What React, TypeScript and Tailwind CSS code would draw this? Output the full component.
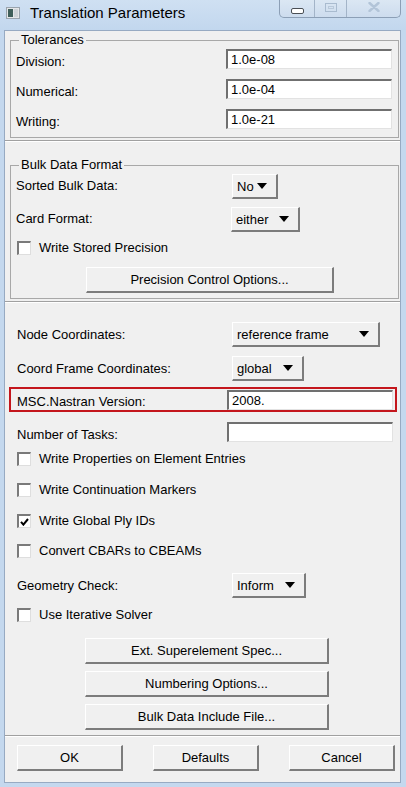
import React from "react";

const ui = "font-['Liberation_Sans',Arial,sans-serif] text-[13px] leading-[14px] text-black";

function TextField({ value = "", className = "" }: { value?: string; className?: string }) {
  return (
    <div
      className={`h-[20px] bg-white border-t-2 border-l-2 border-t-[#707070] border-l-[#707070] border-r border-b border-r-[#e2e2e2] border-b-[#e2e2e2] pl-[3px] pt-[1px] leading-[15px] ${className}`}
    >
      {value}
    </div>
  );
}

function Triangle() {
  return (
    <svg width="10" height="6" viewBox="0 0 10 6">
      <polygon points="0,0 10,0 5,6" fill="#000" />
    </svg>
  );
}

function OptionMenu({ value, className = "" }: { value: string; className?: string }) {
  return (
    <div
      className={`h-[25px] flex items-center justify-between pl-[4px] pr-[9px] bg-[#f0f0f0] border-t border-l border-t-white border-l-white border-r-2 border-b-2 border-r-[#7c7c7c] border-b-[#7c7c7c] ${className}`}
    >
      <span className="pt-[2px]">{value}</span>
      <Triangle />
    </div>
  );
}

function PushButton({ label, className = "" }: { label: string; className?: string }) {
  return (
    <button
      type="button"
      className={`h-[26px] flex items-center justify-center bg-[#f0f0f0] border-t border-l border-t-white border-l-white border-r-2 border-b-2 border-r-[#7c7c7c] border-b-[#7c7c7c] ${className}`}
    >
      {label}
    </button>
  );
}

function CheckBox({ label, checked = false }: { label: string; checked?: boolean }) {
  return (
    <div className="h-[16px] flex items-center pl-[12px]">
      <span className="w-[14px] h-[14px] bg-white border-t-2 border-l-2 border-t-[#7a7a7a] border-l-[#7a7a7a] border-r border-b border-r-[#dedede] border-b-[#dedede] flex items-center justify-center">
        {checked && (
          <svg width="9" height="8" viewBox="0 0 9 8">
            <path d="M1 3.8 L3.4 6.6 L8 1" stroke="#000" strokeWidth="2" fill="none" />
          </svg>
        )}
      </span>
      <span className="ml-[8px]">{label}</span>
    </div>
  );
}

function Separator() {
  return <div className="h-[2px] shrink-0 border-t border-t-[#a0a0a0] border-b border-b-white" />;
}

function TitleBar() {
  return (
    <div className="h-[30px] shrink-0 flex items-start bg-gradient-to-b from-[#cfe0f2] to-[#c2d7ee]">
      <svg width="14" height="12" viewBox="0 0 14 12" className="mt-[7px] ml-[6px]">
        <rect x="0.5" y="0.5" width="13" height="11" fill="#e4e6e8" stroke="#9aa4ad" />
        <rect x="2" y="2" width="5" height="8" fill="#3f5f5a" />
        <rect x="8" y="2" width="4" height="8" fill="#cfd4d8" />
      </svg>
      <span className="ml-[10px] mt-[4px] font-['Liberation_Sans',Arial,sans-serif] text-[15px] leading-[18px] text-black">
        Translation Parameters
      </span>
      <div className="ml-auto mr-[5px] flex h-[18px] rounded-b-[5px] border border-t-0 border-[#8c9fb6] bg-gradient-to-b from-[#dbe7f3] to-[#cddcee] overflow-hidden">
        <div className="w-[35px] flex items-center justify-center border-r border-r-[#a3b4c8]">
          <span className="w-[13px] h-[6px] mt-[4px] rounded-[2px] bg-white border border-[#4a4f55]" />
        </div>
        <div className="w-[32px] flex items-center justify-center border-r border-r-[#a3b4c8]">
          <span className="w-[12px] h-[9px] -mt-[2px] border border-[#a9bbcf] flex items-center justify-center">
            <span className="w-[6px] h-[3px] border border-[#b9c9da]" />
          </span>
        </div>
        <div className="w-[53px] flex items-center justify-center">
          <svg width="12" height="10" viewBox="0 0 12 10" className="-mt-[3px]">
            <path d="M1.5 1 L10.5 9 M10.5 1 L1.5 9" stroke="#b2c4d8" strokeWidth="2.4" strokeLinecap="round" />
          </svg>
        </div>
      </div>
    </div>
  );
}

export default function App() {
  return (
    <div className={`w-[406px] h-[787px] flex flex-col bg-[#c4d8ee] ${ui}`}>
      <TitleBar />
      <div className="ml-[4px] mr-[5px] h-[753px] flex flex-col bg-[#f0f0f0] border border-[#97aac2]">
        {/* Tolerances */}
        <div className="h-[109px] shrink-0 flex flex-col pt-[2px] pb-[2px] pl-[5px] pr-[1px]">
          <fieldset className="flex-1 border border-[#a8a8a8] pr-[6px]">
            <legend className="ml-[8px] px-[2px] leading-[14px]">Tolerances</legend>
            <div className="flex flex-col gap-[10px] pt-[2px]">
              <div className="flex items-end justify-between pl-[5px]">
                <span>Division:</span>
                <TextField value="1.0e-08" className="w-[166px]" />
              </div>
              <div className="flex items-end justify-between pl-[5px]">
                <span>Numerical:</span>
                <TextField value="1.0e-04" className="w-[166px]" />
              </div>
              <div className="flex items-end justify-between pl-[5px]">
                <span>Writing:</span>
                <TextField value="1.0e-21" className="w-[166px]" />
              </div>
            </div>
          </fieldset>
        </div>
        <Separator />

        {/* Bulk Data Format */}
        <div className="h-[159px] shrink-0 flex flex-col pt-[16px] pb-[2px] pl-[5px] pr-[1px]">
          <fieldset className="flex-1 border border-[#a8a8a8]">
            <legend className="ml-[8px] px-[2px] leading-[14px]">Bulk Data Format</legend>
            <div className="flex flex-col pt-[1px]">
              <div className="h-[26px] flex items-center">
                <span className="w-[221px] pl-[5px]">Sorted Bulk Data:</span>
                <OptionMenu value="No" className="w-[46px]" />
              </div>
              <div className="h-[26px] mt-[7px] flex items-center">
                <span className="w-[220px] pl-[5px]">Card Format:</span>
                <OptionMenu value="either" className="w-[69px]" />
              </div>
              <div className="mt-[8px] -ml-[6px]">
                <CheckBox label="Write Stored Precision" />
              </div>
              <div className="mt-[11px] pl-[75px]">
                <PushButton label="Precision Control Options..." className="w-[248px]" />
              </div>
            </div>
          </fieldset>
        </div>
        <Separator />

        {/* General options */}
        <div className="h-[432px] shrink-0 flex flex-col pt-[19px]">
          <div className="h-[25px] flex items-center">
            <span className="w-[227px] pl-[12px]">Node Coordinates:</span>
            <OptionMenu value="reference frame" className="w-[148px]" />
          </div>
          <div className="h-[25px] mt-[9px] flex items-center">
            <span className="w-[227px] pl-[12px]">Coord Frame Coordinates:</span>
            <OptionMenu value="global" className="w-[72px]" />
          </div>
          <div className="h-[25px] mt-[6px] ml-[4px] w-[388px] border-2 border-[#c4161c] flex items-end justify-between pr-[2px]">
            <span className="pl-[6px] pb-[1px]">MSC.Nastran Version:</span>
            <TextField value="2008." className="w-[166px]" />
          </div>
          <div className="h-[20px] mt-[10px] flex items-end justify-between pr-[7px]">
            <span className="pl-[12px]">Number of Tasks:</span>
            <TextField className="w-[166px]" />
          </div>
          <div className="mt-[9px]">
            <CheckBox label="Write Properties on Element Entries" />
          </div>
          <div className="mt-[15px]">
            <CheckBox label="Write Continuation Markers" />
          </div>
          <div className="mt-[15px]">
            <CheckBox label="Write Global Ply IDs" checked />
          </div>
          <div className="mt-[14px]">
            <CheckBox label="Convert CBARs to CBEAMs" />
          </div>
          <div className="h-[25px] mt-[14px] flex items-center">
            <span className="w-[227px] pl-[12px]">Geometry Check:</span>
            <OptionMenu value="Inform" className="w-[74px]" />
          </div>
          <div className="mt-[9px]">
            <CheckBox label="Use Iterative Solver" />
          </div>
          <div className="mt-[15px] pl-[80px] flex flex-col gap-[7px]">
            <PushButton label="Ext. Superelement Spec..." className="w-[244px]" />
            <PushButton label="Numbering Options..." className="w-[244px]" />
            <PushButton label="Bulk Data Include File..." className="w-[244px]" />
          </div>
        </div>
        <Separator />

        {/* Dialog buttons */}
        <div className="h-[44px] shrink-0 flex items-start justify-between pt-[8px] pl-[12px] pr-[5px]">
          <PushButton label="OK" className="w-[106px]" />
          <PushButton label="Defaults" className="w-[106px]" />
          <PushButton label="Cancel" className="w-[106px]" />
        </div>
      </div>
    </div>
  );
}
